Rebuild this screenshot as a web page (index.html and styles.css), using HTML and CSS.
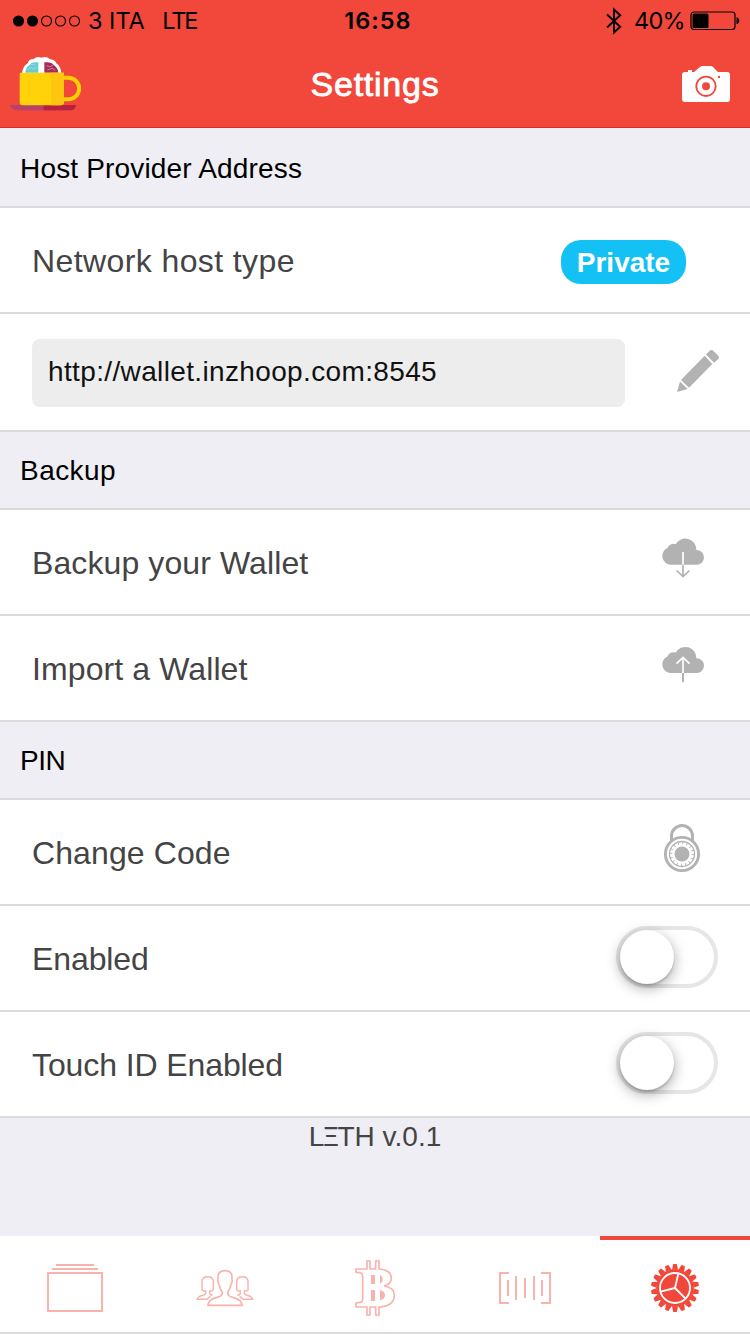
FILE: index.html
```html
<!DOCTYPE html>
<html lang="en">
<head>
<meta charset="utf-8">
<title>Settings</title>
<link rel="stylesheet" href="styles.css">
</head>
<body>
<div class="app">
  <header class="header">
    <div class="status">
      <div class="status-left">
        <svg class="signal" width="70" height="14" viewBox="0 0 70 14"><g stroke="#000" stroke-width="1.1"><circle cx="6.500" cy="7" r="5"/><circle cx="20.500" cy="7" r="5"/><g fill="none"><circle cx="34.500" cy="7" r="5"/><circle cx="48.500" cy="7" r="5"/><circle cx="62.500" cy="7" r="5"/></g></g></svg>
        <span class="carrier">3 ITA</span><span class="radio">LTE</span>
      </div>
      <span class="clock">16:58</span>
      <div class="status-right">
        <svg class="bluetooth" width="16" height="28" viewBox="0 0 16 28"><path d="M1 7.5 14.2 19.8 8 25.5V2.5L14.2 8.2 1 20.5" fill="none" stroke="#000" stroke-width="1.9"/></svg>
        <span class="percent">40%</span>
        <svg class="battery" width="50" height="20" viewBox="0 0 50 20"><rect x="1" y="1" width="44" height="17.5" rx="3" fill="none" stroke="#000" stroke-width="1.2"/><rect x="2.5" y="2.5" width="16" height="14.5" rx="1.5"/><path d="M46.5 6.5h.8q2 1 2 3.2t-2 3.2h-.8z"/></svg>
      </div>
    </div>
    <div class="navbar">
      <svg class="logo" width="90" height="70" viewBox="0 0 270 210">
        <path d="M30 165h198q-2 16-18 16H52q-18 0-22-16z" fill="#b94069"/>
        <path d="M131 165h97q-2 16-18 16h-79z" fill="#b7203f"/>
        <path d="M66 70Q68 49 83 40Q86 27 101 27Q110 17 124 23Q139 17 149 27Q164 28 169 40Q183 50 184 70z" fill="#fff"/>
        <path d="M76 68q1-15 12-22 5-12 27-9v31z" fill="#65cdd0"/>
        <path d="M133 37q22-3 29 9 12 8 13 22h-42z" fill="#a52b58"/>
        <path d="M83 58l11-6 6 5 10-5M92 43l14 2M139 47l12 3 8-5M142 60l14-5 10 6" fill="none" stroke="#eee0e6" stroke-width="2" opacity=".7"/>
        <path d="M190 83h15a31 31 0 0 1 0 65h-15" fill="none" stroke="#ffd000" stroke-width="12"/>
        <path d="M59 68h133v88q0 10-10 10H69q-10 0-10-10z" fill="#ffd20a"/>
        <path d="M153 68h39v88q0 10-10 10h-29z" fill="#ffc610"/>
      </svg>
      <h1 class="title">Settings</h1>
      <svg class="camera" width="48" height="36" viewBox="0 0 48 36">
        <path d="M3 6h3V4h4v2h2L18 1q1-1 2.500-1h8q1.500 0 2.500 1l5 5h9q3 0 3 3v24q0 3-3 3H3q-3 0-3-3V9q0-3 3-3z" fill="#fff"/>
        <g fill="#f2483b"><circle cx="24" cy="20.300" r="4"/><circle cx="37" cy="11" r="1.200"/></g><circle cx="24" cy="20.300" r="9.700" fill="none" stroke="#f2483b" stroke-width="1.800"/>
      </svg>
    </div>
  </header>

  <main class="content">
    <h2 class="divider first">Host Provider Address</h2>
    <div class="row"><span class="label wide">Network host type</span><span class="badge">Private</span></div>
    <div class="row host">
      <div class="field">http://wallet.inzhoop.com:8545</div>
      <svg class="icon" viewBox="668 342 60 60"><path d="M704.700 355.700 712.300 364 689 387.700 681 380zM706 354.500 709.500 351Q711.500 349 713.500 351L718 355.500Q720 357.500 718 359.300L714 362.700zM680 381.500 687.700 389 677 392z"/></svg>
    </div>
    <h2 class="divider wide">Backup</h2>
    <div class="row"><span class="label">Backup your Wallet</span>
      <svg class="icon" viewBox="653 532 60 60"><path d="M670.700 564.700a8.700 8.700 0 0 1-3.300-16.600 6.300 6.300 0 0 1 8.200-3.800 11.100 11.100 0 0 1 20.800 5.600 7.400 7.400 0 0 1 .4 14.800z"/><path d="M683 552v12.700" fill="none" stroke="#f4f4f4" stroke-width="2"/><path d="M683 564.700v12M676.500 570.500l6.500 6 6.500-6" fill="none" stroke="#b2b2b2" stroke-width="1.700"/></svg>
    </div>
    <div class="row"><span class="label">Import a Wallet</span>
      <svg class="icon" viewBox="653 638 60 60"><path d="M670.700 673a8.700 8.700 0 0 1-3.300-16.600 6.300 6.300 0 0 1 8.200-3.800 11.100 11.100 0 0 1 20.800 5.600 7.400 7.400 0 0 1 .4 14.800z"/><path d="M683 657.500V673M676.500 663.700l6.500-6.200 6.500 6.200" fill="none" stroke="#fff" stroke-width="1.700"/><path d="M683 673v9" fill="none" stroke="#b2b2b2" stroke-width="2"/></svg>
    </div>
    <h2 class="divider tight">PIN</h2>
    <div class="row"><span class="label">Change Code</span>
      <svg class="icon" viewBox="653 822 60 60"><g fill="none" stroke="#b2b2b2"><path d="M671.500 842v-6a10.500 10.500 0 0 1 21 0v6" stroke-width="3"/><circle cx="682" cy="854" r="16.600" stroke-width="2.900"/><circle cx="682" cy="854" r="12.500" stroke-width="1.300"/><circle cx="682" cy="854" r="11" stroke-width="2.600" stroke-dasharray="0.900 3.420"/></g><circle cx="682" cy="854" r="7.500"/></svg>
    </div>
    <div class="row"><span class="label tight">Enabled</span><span class="toggle"><span class="knob"></span></span></div>
    <div class="row"><span class="label tight">Touch ID Enabled</span><span class="toggle"><span class="knob"></span></span></div>
    <p class="version">L<span class="xi">Ξ</span>TH v.0.1</p>
  </main>

  <nav class="tabs">
    <a class="tab"><svg class="tab-icon" viewBox="45 84 180 180"><path d="M54 129h162v114H54zM66 117h138M78 105h114"/></svg></a>
    <a class="tab"><svg class="tab-icon" viewBox="495 84 180 180"><path stroke-width="5" d="M534 226H636Q634 210 617 205L602 200Q592 196 593 186Q601 176 603 163Q608 157 606 146Q608 122 585 122Q562 122 564 146Q562 157 567 163Q569 176 577 186Q578 196 568 200L552 205Q536 210 534 226z"/><path stroke-width="4.500" d="M548 196Q539 195 539 190V183Q545 184 550 179V154Q549 140 533 140Q517 140 516 154V180Q521 184 527 183V190Q527 193 520 196L509 199Q502 202 502 208H530L541 199M622 196Q631 195 631 190V183Q625 184 620 179V154Q621 140 637 140Q653 140 654 154V180Q649 184 643 183V190Q643 193 650 196L661 199Q668 202 668 208H640L629 199"/></svg></a>
    <a class="tab"><svg class="tab-icon" viewBox="45 84 180 180"><path stroke-width="5" d="M78 117H111V93H120V117H137V93H147V117Q184 119 184 145Q184 162 162 168Q193 173 193 195Q193 229 147 231V255H137V231H120V255H111V231H78V219L91 217Q98 216 98 207V140Q98 129 89 128L78 127z"/><path class="solid" d="M123 135h12v27h-12zM123 180h12v33h-12zM150 135q8 3 8 13t-8 13zM150 180q15 4 15 16t-15 15z"/></svg></a>
    <a class="tab"><svg class="tab-icon" viewBox="495 84 180 180"><path d="M537 129H510V219H537M633 129H660V219H633M534 150V198M558 138V210M585 144V204M612 138V210M636 150V198"/></svg></a>
    <a class="tab active"><svg class="tab-icon" viewBox="-90 -90 180 180">
      <defs><path id="tooth" d="M-9-55-6-70Q-5.500-72-4-72H4Q5.500-72 6-70L9-55z"/></defs>
      <g class="gear"><circle r="56.500"/><use href="#tooth"/><use href="#tooth" transform="rotate(20)"/><use href="#tooth" transform="rotate(40)"/><use href="#tooth" transform="rotate(60)"/><use href="#tooth" transform="rotate(80)"/><use href="#tooth" transform="rotate(100)"/><use href="#tooth" transform="rotate(120)"/><use href="#tooth" transform="rotate(140)"/><use href="#tooth" transform="rotate(160)"/><use href="#tooth" transform="rotate(180)"/><use href="#tooth" transform="rotate(200)"/><use href="#tooth" transform="rotate(220)"/><use href="#tooth" transform="rotate(240)"/><use href="#tooth" transform="rotate(260)"/><use href="#tooth" transform="rotate(280)"/><use href="#tooth" transform="rotate(300)"/><use href="#tooth" transform="rotate(320)"/><use href="#tooth" transform="rotate(340)"/></g>
      <g class="spokes"><circle r="45"/><path d="M0 0 10-43M0 0-43 11M0 0 31 31"/></g>
    </svg></a>
  </nav>
</div>
</body>
</html>
```

FILE: styles.css
```css
* { box-sizing: border-box; }
body {
  margin: 0;
  font-family: "Liberation Sans", Arial, sans-serif;
  color: #444;
  background: #efeef4;
}
.app { width: 750px; height: 1334px; display: flex; flex-direction: column; overflow: hidden; }
svg { display: block; flex: none; }

.header { height: 128px; background: #f2483b; border-bottom: 1px solid #dd2c1c; color: #000; }
.status {
  height: 42px;
  display: grid;
  grid-template-columns: 1fr auto 1fr;
  align-items: center;
  padding: 0 10px 0 12px;
  font: 400 23.5px/42px Inter, sans-serif;
}
.status-left, .status-right { display: flex; align-items: center; }
.status-right { justify-content: flex-end; }
.carrier { margin-left: 6px; }
.radio { margin-left: 17.5px; letter-spacing: -2.1px; }
.clock { font-weight: 600; letter-spacing: 1px; padding-left: 4px; }
.percent { margin: 0 5px 0 12px; letter-spacing: -0.7px; }
.navbar { height: 84px; display: flex; justify-content: space-between; align-items: center; padding-right: 20px; }
.logo { margin-top: 2px; }
.title {
  margin: 1px 0 0 -22px;
  font-size: 34px;
  font-weight: 400;
  letter-spacing: 0.75px;
  color: #fff;
  -webkit-text-stroke: 0.8px #fff;
}

.content { flex: 1; }
.divider {
  height: 78px;
  margin: 0;
  padding-left: 20px;
  border-bottom: 2px solid #dadadd;
  font-size: 28px;
  font-weight: 400;
  line-height: 78px;
  letter-spacing: 0.17px;
  color: #000;
}
.divider.first { height: 80px; line-height: 82px; }
.divider.wide { letter-spacing: 0.45px; }
.divider.tight { letter-spacing: -0.5px; }
.row {
  height: 106px;
  display: flex;
  align-items: center;
  justify-content: space-between;
  padding: 0 32px;
  background: #fff;
  border-bottom: 2px solid #dcdcdc;
}
.label { font-size: 32px; line-height: 40px; letter-spacing: 0.1px; padding-top: 2px; }
.label.wide { letter-spacing: 0.4px; }
.label.tight { letter-spacing: -0.1px; }
.badge {
  width: 125px;
  height: 44px;
  margin: 4px 32px 0 0;
  border-radius: 20px;
  background: #13c1f5;
  color: #fff;
  font-size: 28px;
  font-weight: 700;
  line-height: 45px;
  text-align: center;
}
.icon { width: 60px; height: 60px; margin-right: 5px; fill: #b2b2b2; }
.host { height: 118px; padding-right: 22px; }
.host .icon { margin: 0; }
.field {
  width: 593px;
  height: 68px;
  margin-top: 2px;
  padding-left: 16px;
  border-radius: 8px;
  background: #ededed;
  color: #111;
  font-size: 28px;
  line-height: 66px;
  letter-spacing: 0.36px;
}
.toggle { width: 102px; height: 62px; margin-top: -2px; border: 4px solid #e6e6e6; border-radius: 31px; }
.knob {
  display: block;
  width: 54px;
  height: 54px;
  border-radius: 50%;
  background: #fff;
  box-shadow: 0 4px 14px rgba(0, 0, 0, 0.35), 0 2px 2px rgba(0, 0, 0, 0.15);
}
.version { margin: 0; font-size: 28px; line-height: 38px; text-align: center; }
.xi { display: inline-block; transform: scaleX(0.85); margin: 0 -2.500px; }

.tabs { height: 98px; display: flex; background: #fff; border-bottom: 2px solid #dcdcdc; }
.tab { flex: 1; display: flex; justify-content: center; border-top: 4px solid #fff; padding-top: 18px; }
.tab.active { border-color: #f2483b; }
.tab-icon { width: 60px; height: 60px; fill: none; stroke: #f9b3ae; stroke-width: 6; }
.tab-icon .solid { fill: #f9b3ae; stroke: none; }
.gear { fill: #f2483b; stroke: none; }
.spokes { stroke: #fff; stroke-width: 5.500; }
```
